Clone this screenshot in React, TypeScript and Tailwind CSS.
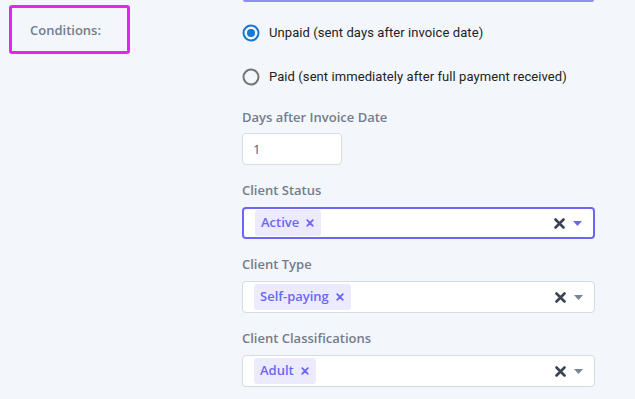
import { useState } from "react";

const label = "text-[13px] font-semibold leading-[18px] text-[#747c8c] [font-family:'Open_Sans',sans-serif]";

function Radio({ checked, text }: { checked: boolean; text: string }) {
  return (
    <label className="flex h-[44px] items-center gap-[9px]">
      <svg width="18" height="18" viewBox="0 0 18 18">
        <circle cx="9" cy="9" r="7.5" fill="none" stroke={checked ? "#1976d2" : "#757575"} strokeWidth="2" />
        {checked && <circle cx="9" cy="9" r="4" fill="#1976d2" />}
      </svg>
      <span className="text-[13px] tracking-[0.08px] text-[#222] [font-family:Roboto,sans-serif]">{text}</span>
    </label>
  );
}

function MultiSelect({ title, tag, focused }: { title: string; tag: string; focused?: boolean }) {
  return (
    <div className="mb-4">
      <div className={`${label} mb-2`}>{title}</div>
      <div
        className={
          "flex h-[32px] items-center rounded-[4px] bg-white pr-[11px] " +
          (focused ? "border-2 border-[#6c66f6] pl-[11px]" : "border border-[#d6dae1] pl-[11px]")
        }
      >
        <span className="flex h-[26px] items-center gap-[7px] rounded-[3px] bg-[#ecebfd] pl-[6px] pr-[7px] text-[13px] font-semibold text-[#6c66f6] [font-family:'Open_Sans',sans-serif]">
          {tag}
          <svg width="8" height="8" viewBox="0 0 8 8">
            <path d="M1.2 1.2l5.6 5.6M6.8 1.2L1.2 6.8" stroke="#6c66f6" strokeWidth="1.8" strokeLinecap="round" />
          </svg>
        </span>
        <div className="flex-1" />
        <svg width="11" height="11" viewBox="0 0 11 11">
          <path d="M1.5 1.5l8 8M9.5 1.5l-8 8" stroke="#3b4354" strokeWidth="2.6" strokeLinecap="round" />
        </svg>
        <svg className="ml-[8px]" width="9" height="5" viewBox="0 0 9 5">
          <path d="M0 0h9L4.5 5z" fill={focused ? "#6c66f6" : "#7c8391"} />
        </svg>
      </div>
    </div>
  );
}

export default function App() {
  const [days, setDays] = useState("1");
  return (
    <div className="flex h-[399px] w-[635px] overflow-hidden bg-[#f3f6fb]">
      <div className="w-[242px] shrink-0 pl-[9px] pt-[5px]">
        <div className="flex h-[49px] w-[121px] items-center rounded-[3px] border-[3px] border-[#e424f2] pl-[18px]">
          <span className={label}>Conditions:</span>
        </div>
      </div>
      <div className="w-[353px]">
        <div className="mx-[1px] h-[2px] rounded-b-[2px] bg-[#8f8df8]" />
        <div className="mt-[9px]">
          <Radio checked text="Unpaid (sent days after invoice date)" />
          <Radio checked={false} text="Paid (sent immediately after full payment received)" />
        </div>
        <div className="mt-[9px]">
          <div className={`${label} mb-[7px]`}>Days after Invoice Date</div>
          <input
            value={days}
            onChange={(e) => setDays(e.target.value)}
            className="mb-4 h-[32px] w-[100px] rounded-[4px] border border-[#d8dce3] bg-white px-[10px] text-[13px] text-[#4b5c8e] outline-none [font-family:'Open_Sans',sans-serif]"
          />
        </div>
        <MultiSelect title="Client Status" tag="Active" focused />
        <MultiSelect title="Client Type" tag="Self-paying" />
        <MultiSelect title="Client Classifications" tag="Adult" />
      </div>
    </div>
  );
}
